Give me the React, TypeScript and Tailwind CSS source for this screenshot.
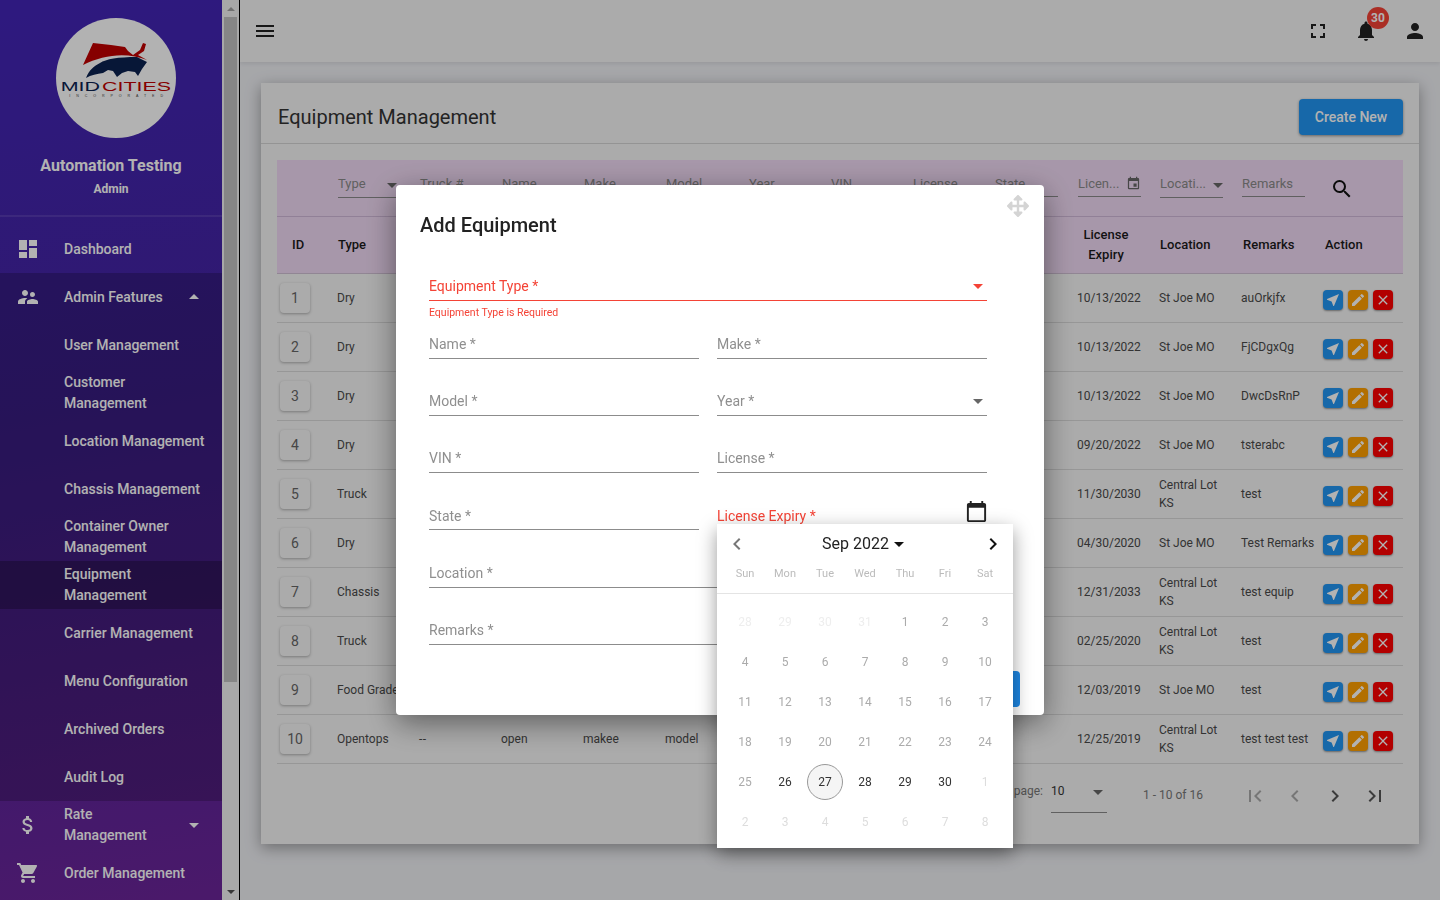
import {
  MdDashboard, MdSupervisorAccount, MdArrowDropUp, MdArrowDropDown, MdAttachMoney, MdShoppingCart, MdMenu,
  MdFullscreen, MdNotifications, MdPerson, MdSearch, MdNearMe, MdEdit, MdClose, MdEvent,
  MdCalendarToday, MdFirstPage, MdLastPage, MdChevronLeft, MdChevronRight,
} from 'react-icons/md';
import { FaArrowsAlt } from 'react-icons/fa';

const GRID = 'grid grid-cols-[60px_82px_82px_82px_82px_83px_82px_82px_82px_82px_82px_83px_82px_80px]';

const rows = [
  { id: 1, type: 'Dry', expiry: '10/13/2022', location: 'St Joe MO', remarks: 'auOrkjfx' },
  { id: 2, type: 'Dry', expiry: '10/13/2022', location: 'St Joe MO', remarks: 'FjCDgxQg' },
  { id: 3, type: 'Dry', expiry: '10/13/2022', location: 'St Joe MO', remarks: 'DwcDsRnP' },
  { id: 4, type: 'Dry', expiry: '09/20/2022', location: 'St Joe MO', remarks: 'tsterabc' },
  { id: 5, type: 'Truck', expiry: '11/30/2030', location: 'Central Lot KS', remarks: 'test' },
  { id: 6, type: 'Dry', expiry: '04/30/2020', location: 'St Joe MO', remarks: 'Test Remarks' },
  { id: 7, type: 'Chassis', expiry: '12/31/2033', location: 'Central Lot KS', remarks: 'test equip' },
  { id: 8, type: 'Truck', expiry: '02/25/2020', location: 'Central Lot KS', remarks: 'test' },
  { id: 9, type: 'Food Grade', expiry: '12/03/2019', location: 'St Joe MO', remarks: 'test' },
  { id: 10, type: 'Opentops', truck: '--', name: 'open', make: 'makee', model: 'model', expiry: '12/25/2019', location: 'Central Lot KS', remarks: 'test test test' },
];

const subItems = ['User Management', 'Customer Management', 'Location Management', 'Chassis Management', 'Container Owner Management', 'Equipment Management', 'Carrier Management', 'Menu Configuration', 'Archived Orders', 'Audit Log'];

const filters = ['Truck #', 'Name', 'Make', 'Model', 'Year', 'VIN', 'License', 'State'];
const heads = ['Truck #', 'Name', 'Make', 'Model', 'Year', 'VIN', 'License Number', 'License State'];

function Logo() {
  return (
    <div className="w-[120px] h-[120px] rounded-full bg-white ml-[56px] shrink-0 overflow-hidden">
      <svg viewBox="0 0 120 120" className="w-full h-full">
        <path d="M27 47 L37 25 L55 27 L69 29 L72 33 L77 37 L84 32 L87 25 L90 26 L88 33 L82 37 L91 42 C72 34 48 36 27 47Z" fill="#c00000" />
        <path d="M30 60 C33 52 38 48 44 45 C50 41 62 39 81 39 L91 44 L86 51 L82 58 L79 54 L72 53 L66 55 L61 59 L57 53 L52 52 L47 55 C41 56 35 57 30 60Z" fill="#0b2150" />
        <text x="4.7" y="73" fontFamily="Liberation Sans, sans-serif" fontSize="13" textLength="39.3" lengthAdjust="spacingAndGlyphs" fill="#0b2150">MID</text>
        <text x="46" y="73" fontFamily="Liberation Sans, sans-serif" fontSize="13" textLength="69" lengthAdjust="spacingAndGlyphs" fill="#c00000">CITIES</text>
        <text x="13.3" y="78.7" fontFamily="Liberation Sans, sans-serif" fontSize="3.6" textLength="93.7" fill="#444">INCORPORATED</text>
      </svg>
    </div>
  );
}

function NavRow({ label, icon, caret }: { label: string; icon?: React.ReactNode; caret?: React.ReactNode }) {
  return (
    <div className={`h-12 flex items-center text-white text-sm leading-[21px] font-medium ${label === 'Equipment Management' ? 'bg-black/25' : ''}`}>
      <div className="w-[64px] shrink-0 flex justify-center pr-[8px] text-[24px]">{icon}</div>
      <div className={caret ? 'w-[100px]' : 'w-[145px]'}>{label}</div>
      {caret && <div className="text-[24px] ml-[18px]">{caret}</div>}
    </div>
  );
}

function Sidebar() {
  return (
    <aside className="w-[222px] shrink-0 h-screen overflow-hidden bg-[linear-gradient(170deg,#4225b7_0%,#45239f_45%,#6b2599_100%)]">
      <div className="h-[217px] border-b-2 border-white/10 pt-[18px] flex flex-col">
        <Logo />
        <div className="text-white text-base font-bold text-center mt-[17px] leading-[22px]">Automation Testing</div>
        <div className="text-white text-xs font-bold text-center mt-[2px] leading-[20px]">Admin</div>
      </div>
      <div className="mt-[8px]">
        <NavRow label="Dashboard" icon={<MdDashboard />} />
        <div className="bg-black/20">
          <NavRow label="Admin Features" icon={<MdSupervisorAccount />} caret={<MdArrowDropUp />} />
          {subItems.map((s) => <NavRow key={s} label={s} />)}
        </div>
        <NavRow label="Rate Management" icon={<MdAttachMoney />} caret={<MdArrowDropDown />} />
        <NavRow label="Order Management" icon={<MdShoppingCart />} />
      </div>
    </aside>
  );
}

function Scrollbar() {
  return (
    <div className="w-[18px] shrink-0 h-screen bg-[#f1f1f1] border-r border-black flex flex-col items-center">
      <div className="h-[17px] flex items-center"><div className="w-0 h-0 border-x-[4px] border-x-transparent border-b-[4px] border-b-[#a3a3a3]" /></div>
      <div className="w-[13px] h-[665px] bg-[#c1c1c1]" />
      <div className="flex-1" />
      <div className="h-[17px] flex items-center"><div className="w-0 h-0 border-x-[4px] border-x-transparent border-t-[4px] border-t-[#505050]" /></div>
    </div>
  );
}

function FilterBox({ label, icon, width = 'w-[63px]', left = 'ml-[1px]', height = 'h-[26px]' }: { label: string; icon?: React.ReactNode; width?: string; left?: string; height?: string }) {
  return (
    <div className={`${width} ${left} ${height} mt-[11px] border-b border-[#8a8a8a] flex items-start pt-[3px] justify-between text-[13px] text-[#8a8a8a]`}>
      <span className="whitespace-nowrap">{label}</span>
      {icon}
    </div>
  );
}

function Table() {
  return (
    <div>
      <div className="bg-[#f0d9f4]">
        <div className={`${GRID} h-[57px] border-b border-[#d0b8d8]`}>
          <div />
          <FilterBox label="Type" width="w-[60px]" height="h-[27px]" icon={<MdArrowDropDown className="text-[24px] text-[#666] -mr-[6px] shrink-0 -mt-[1px]" />} />
          {filters.map((f) => <FilterBox key={f} label={f} />)}
          <FilterBox label="Licen..." left="ml-[2px]" icon={<MdEvent className="text-[15px] text-[#666] shrink-0 mt-[2px]" />} />
          <FilterBox label="Locati..." left="ml-[2px]" height="h-[27px]" icon={<MdArrowDropDown className="text-[24px] text-[#666] -mr-[1px] shrink-0 -mt-[1px]" />} />
          <FilterBox label="Remarks" />
          <div className="pl-[7px] pt-[17px]"><MdSearch className="text-[24px] text-[#111]" /></div>
        </div>
        <div className={`${GRID} h-[57px] items-center text-[13px] font-medium leading-[20px] text-[#1a1a1a] border-b border-[#d0c0d4]`}>
          <div className="pl-[15px]">ID</div>
          <div className="pl-[1px]">Type</div>
          {heads.map((h) => <div key={h} className="pl-[1px] pr-[8px]">{h}</div>)}
          <div className="text-center pr-[22px]">License Expiry</div>
          <div className="pl-[2px]">Location</div>
          <div className="pl-[2px]">Remarks</div>
          <div className="pl-[2px]">Action</div>
        </div>
      </div>
      {rows.map((r) => (
        <div key={r.id} className={`${GRID} h-[49px] items-center text-xs leading-[18px] text-[#4a4a4a] border-b border-[#d8d8d8]`}>
          <div className="pl-[3px]">
            <div className="w-[30px] h-[30px] rounded-[4px] bg-[#f5f5f5] shadow-[0_1px_3px_rgba(0,0,0,0.3)] flex items-center justify-center text-sm text-[#666]">{r.id}</div>
          </div>
          <div className="whitespace-nowrap">{r.type}</div>
          <div className="tracking-[0.5px]">{r.truck}</div>
          <div>{r.name}</div>
          <div>{r.make}</div>
          <div>{r.model}</div>
          <div /><div /><div /><div />
          <div className="pl-[1px]">{r.expiry}</div>
          <div className="pl-[1px] pr-[8px]">{r.location}</div>
          <div className="whitespace-nowrap">{r.remarks}</div>
          <div className="flex gap-[5px] mt-[4px]">
            <div className="w-5 h-5 rounded-[4px] bg-[#2196f3] shadow-[0_1px_2px_rgba(0,0,0,0.4)] flex items-center justify-center text-white text-[16px]"><MdNearMe /></div>
            <div className="w-5 h-5 rounded-[4px] bg-[#ffa000] shadow-[0_1px_2px_rgba(0,0,0,0.4)] flex items-center justify-center text-white text-[16px]"><MdEdit /></div>
            <div className="w-5 h-5 rounded-[4px] bg-[#ff0000] shadow-[0_1px_2px_rgba(0,0,0,0.4)] flex items-center justify-center text-white text-[16px]"><MdClose /></div>
          </div>
        </div>
      ))}
      <div className="h-[80px] flex text-xs text-[#777]">
        <div className="ml-[640px] w-[134px] text-right pt-[19px] pr-[8px] whitespace-nowrap">Rows per page:</div>
        <div className="w-[56px] h-[49px] border-b border-[#8a8a8a] pt-[19px] flex justify-between text-[#333]">
          <span>10</span>
          <MdArrowDropDown className="text-[24px] text-[#666] -mt-[3px] -mr-[3px]" />
        </div>
        <div className="ml-[36px] pt-[23px] w-[100px]">1 - 10 of 16</div>
        <div className="flex items-start pt-[20px] text-[24px]">
          <MdFirstPage className="text-[#aaa] mr-[16px]" />
          <MdChevronLeft className="text-[#aaa] mr-[16px]" />
          <MdChevronRight className="text-[#555] mr-[16px]" />
          <MdLastPage className="text-[#555]" />
        </div>
      </div>
    </div>
  );
}

function Main() {
  return (
    <main className="flex-1 min-w-0 h-screen overflow-hidden bg-[#eeeff3]">
      <header className="h-[62px] bg-[#f5f5f5] shadow-[0_2px_4px_rgba(0,0,0,0.08)] flex items-center">
        <MdMenu className="text-[24px] text-[#222] ml-[13px]" />
        <div className="flex-1" />
        <MdFullscreen className="text-[24px] text-[#222] mr-[24px]" />
        <div className="relative mr-[25px]">
          <MdNotifications className="text-[24px] text-[#222]" />
          <div className="absolute -top-[12px] left-[13px] w-[22px] h-[22px] rounded-full bg-[#f44336] flex items-center justify-center text-white text-xs font-bold">30</div>
        </div>
        <MdPerson className="text-[24px] text-[#222] mr-[13px]" />
      </header>
      <div className="mx-[21px] mt-[21px] bg-[#f5f5f5] shadow-[0_4px_14px_rgba(0,0,0,0.35)]">
        <div className="h-[61px] border-b border-[#d5d5d5] flex items-center justify-between pl-[17px] pr-4 pt-[7px]">
          <h1 className="text-[20px] text-[#333]">Equipment Management</h1>
          <button className="w-[104px] h-9 rounded-[4px] bg-[#2196f3] text-white text-sm font-medium shadow-[0_1px_3px_rgba(0,0,0,0.4)]">Create New</button>
        </div>
        <div className="px-4 pt-4">
          <Table />
        </div>
      </div>
    </main>
  );
}

function Field({ label, select, wide, low }: { label: string; select?: boolean; wide?: boolean; low?: boolean }) {
  return (
    <div className={`h-8 border-b border-[#8c8c8c] flex items-center justify-between text-sm text-[#8f8f8f] ${low ? 'pt-[4px]' : 'pt-[2px]'} ${wide ? 'col-span-2' : ''}`}>
      <span>{label}</span>
      {select && <MdArrowDropDown className="text-[24px] text-[#666] -mr-[3px]" />}
    </div>
  );
}

const before = [28, 29, 30, 31];
const after = [1, 2, 3, 4, 5, 6, 7, 8];

function DatePicker() {
  const days = Array.from({ length: 30 }, (_, i) => i + 1);
  return (
    <div className="absolute left-[717px] top-[524px] w-[296px] h-[324px] bg-white shadow-[0_6px_18px_rgba(0,0,0,0.4)]">
      <div className="h-[38px] flex items-center pl-[8px] pr-[8px] pt-[2px]">
        <MdChevronLeft className="text-[24px] text-[#777]" />
        <div className="flex-1 flex items-center justify-center text-base text-[#222] pr-[3px]">
          Sep 2022
          <MdArrowDropDown className="text-[24px] text-[#111] -ml-[2px] -mr-[6px]" />
        </div>
        <MdChevronRight className="text-[24px] text-[#111]" />
      </div>
      <div className="h-[32px] border-b border-[#e4e4e4] grid grid-cols-7 px-2 pb-[7px] items-center text-center text-[11px] text-[#bbb]">
        {['Sun', 'Mon', 'Tue', 'Wed', 'Thu', 'Fri', 'Sat'].map((d) => <div key={d}>{d}</div>)}
      </div>
      <div className="grid grid-cols-7 px-2 pt-[8px] text-xs">
        {before.map((d) => <div key={`b${d}`} className="h-10 flex items-center justify-center text-[#eeeeee]">{d}</div>)}
        {days.map((d) => (
          <div key={d} className={`h-10 flex items-center justify-center ${d < 26 ? 'text-[#ababab]' : 'text-[#333]'}`}>
            {d === 27
              ? <span className="w-9 h-9 rounded-full bg-[#f5f5f5] border border-[#999] flex items-center justify-center">{d}</span>
              : d}
          </div>
        ))}
        {after.map((d) => <div key={`a${d}`} className="h-10 flex items-center justify-center text-[#dddddd]">{d}</div>)}
      </div>
    </div>
  );
}

function Modal() {
  return (
    <div className="absolute left-[396px] top-[185px] w-[648px] h-[530px] rounded-[4px] bg-white shadow-[0_8px_30px_rgba(0,0,0,0.45)] pt-[28px] px-6">
      <FaArrowsAlt className="absolute right-[15px] top-[10px] text-[22px] text-[#d4d4d4]" />
      <h2 className="text-[20px] leading-6 font-medium text-[#222]">Add Equipment</h2>
      <div className="pl-[9px] pr-[33px] mt-[33px]">
        <div className="h-[31px] border-b border-[#f44336] flex items-center justify-between pt-[2px] text-sm text-[#f44336]">
          <span>Equipment Type *</span>
          <MdArrowDropDown className="text-[24px] -mr-[3px]" />
        </div>
        <div className="mt-[5px] h-[14px] text-[10.5px] leading-[14px] text-[#f44336]">Equipment Type is Required</div>
        <div className="mt-[7px] grid grid-cols-2 gap-x-[18px] gap-y-[25px]">
          <Field label="Name *" />
          <Field label="Make *" />
          <Field label="Model *" />
          <Field label="Year *" select />
          <Field label="VIN *" />
          <Field label="License *" />
          <Field label="State *" low />
          <div className="h-8 flex items-start justify-between text-sm text-[#f44336]">
            <span className="mt-[8px]">License Expiry *</span>
            <MdCalendarToday className="text-[23px] text-[#222] mt-[2px] -mr-[1px]" />
          </div>
          <div className="col-span-2 mt-[1px]"><Field label="Location *" /></div>
          <Field label="Remarks *" wide />
        </div>
      </div>
      <div className="mt-[26px] flex justify-end">
        <button className="w-[100px] h-9 rounded-[4px] bg-[#1e88e5] text-white text-sm font-medium">Save</button>
      </div>
    </div>
  );
}

export default function App() {
  return (
    <div className="h-screen overflow-hidden flex font-[Roboto,sans-serif]">
      <Sidebar />
      <Scrollbar />
      <Main />
      {/* backdrop + dialog */}
      <div className="fixed inset-0 bg-black/30">
        <Modal />
        <DatePicker />
      </div>
    </div>
  );
}
